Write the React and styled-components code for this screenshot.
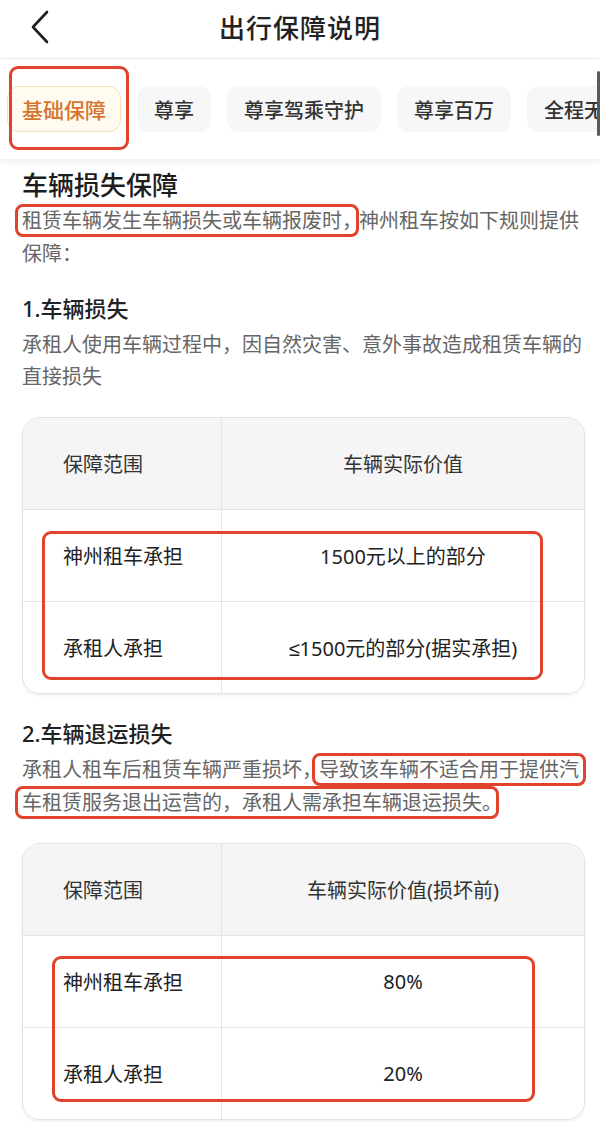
import React from "react";
import styled, { createGlobalStyle } from "styled-components";

const Global = createGlobalStyle`
  * { box-sizing: border-box; }
  body {
    margin: 0;
    background: #fff;
    font-family: "Noto Sans", "Liberation Sans", "Noto Sans CJK SC", sans-serif;
    -webkit-font-smoothing: antialiased;
  }
`;

const Page = styled.div`
  width: 600px;
  min-height: 1122px;
  overflow: hidden;
  background: #fff;
`;

const NavBar = styled.header`
  height: 59px;
  display: grid;
  grid-template-columns: 72px 1fr 72px;
  align-items: center;
  padding-bottom: 4px;
  border-bottom: 1px solid #ededed;
`;

const BackButton = styled.button`
  border: 0;
  background: none;
  padding: 0 0 0 30px;
  height: 40px;
  display: flex;
  align-items: center;
  cursor: pointer;
`;

const NavTitle = styled.h1`
  margin: 0;
  text-align: center;
  font-size: 26px;
  font-weight: 500;
  letter-spacing: 1px;
  color: #222;
`;

const TabBar = styled.nav`
  position: relative;
  height: 101px;
  display: flex;
  align-items: center;
  gap: 16px;
  padding-left: 7px;
  overflow: hidden;
  border-bottom: 1px solid #f0f0f0;
  box-shadow: 0 3px 5px rgba(0, 0, 0, 0.05);
`;

const Tab = styled.button`
  position: relative;
  flex: 0 0 auto;
  height: 46px;
  padding: 0 ${(p) => (p.$active ? "14px" : "16px")};
  border-radius: 12px;
  border: 1.5px solid ${(p) => (p.$active ? "#f1e2b8" : "transparent")};
  background: ${(p) => (p.$active ? "#fffbf1" : "#f7f7f7")};
  color: ${(p) => (p.$active ? "#d7742f" : "#333")};
  font-family: inherit;
  font-size: ${(p) => (p.$active ? "21px" : "20px")};
  font-weight: 500;
  white-space: nowrap;
  cursor: pointer;
`;

const TabMark = styled.span`
  position: absolute;
  top: -21px;
  bottom: -19px;
  left: 1px;
  right: -9px;
  border: 3px solid #e1422b;
  border-radius: 9px;
  pointer-events: none;
`;

const ScrollThumb = styled.span`
  position: absolute;
  right: 0;
  top: 12px;
  width: 3px;
  height: 65px;
  border-radius: 2px;
  background: #5a5a5a;
`;

const Content = styled.main`
  padding: 0 15px 20px 22px;
`;

const SectionTitle = styled.h2`
  margin: 7px 0 0;
  font-size: 26px;
  line-height: 36px;
  font-weight: 500;
  color: #1d1d1d;
`;

const SubTitle = styled.h3`
  margin: ${(p) => p.$top} 0 0;
  font-size: 22px;
  line-height: 32px;
  font-weight: 500;
  color: #222;
`;

const Para = styled.p`
  margin: ${(p) => p.$top} 0 0;
  font-size: 20px;
  line-height: ${(p) => p.$lh};
  color: #666;
  white-space: nowrap;
`;

const Mark = styled.span`
  border: 3px solid #e1422b;
  border-radius: 8px;
  padding: 0 4px;
  margin-left: ${(p) => (p.$lineStart ? "-7px" : "0")};
`;

const Half = styled.span`
  font-family: "Noto Sans CJK SC", sans-serif;
  font-feature-settings: "halt";
`;

const Table = styled.div`
  margin-top: ${(p) => p.$top};
  border: 1.5px solid #e2e2e2;
  border-radius: 18px;
  overflow: hidden;
  box-shadow: 0 2px 3px rgba(0, 0, 0, 0.06);
`;

const TableBody = styled.div`
  position: relative;
`;

const Row = styled.div`
  display: grid;
  grid-template-columns: 199px 1fr;
  height: ${(p) => (p.$head ? "91px" : "92px")};
  background: ${(p) => (p.$head ? "#f5f5f5" : "#fff")};
  border-top: ${(p) => (p.$head ? "none" : "1.5px solid #e4e4e4")};
`;

const LabelCell = styled.div`
  display: flex;
  align-items: center;
  padding-left: 40px;
  border-right: 1.5px solid #e4e4e4;
  font-size: 20px;
  color: ${(p) => (p.$head ? "#333" : "#222")};
`;

const ValueCell = styled.div`
  display: flex;
  align-items: center;
  justify-content: center;
  font-size: 20px;
  color: ${(p) => (p.$head ? "#333" : "#222")};
`;

const TableMark = styled.span`
  position: absolute;
  top: ${(p) => p.$t}px;
  bottom: ${(p) => p.$b}px;
  left: ${(p) => p.$l}px;
  right: ${(p) => p.$r}px;
  border: 3px solid #e1422b;
  border-radius: 9px;
  pointer-events: none;
`;

const tabs = ["基础保障", "尊享", "尊享驾乘守护", "尊享百万", "全程无忧"];

function CoverTable({ top, head, rows, mark }) {
  return (
    <Table $top={top}>
      <Row $head>
        <LabelCell $head>保障范围</LabelCell>
        <ValueCell $head>{head}</ValueCell>
      </Row>
      <TableBody>
        {rows.map(([label, value]) => (
          <Row key={label}>
            <LabelCell>{label}</LabelCell>
            <ValueCell>{value}</ValueCell>
          </Row>
        ))}
        <TableMark $t={mark.t} $b={mark.b} $l={mark.l} $r={mark.r} />
      </TableBody>
    </Table>
  );
}

export default function App() {
  return (
    <Page>
      <Global />
      <NavBar>
        <BackButton aria-label="返回">
          <svg width="20" height="34" viewBox="0 0 20 34" fill="none">
            <path
              d="M17 2 L3 17 L17 32"
              stroke="#1f1f1f"
              strokeWidth="2.6"
              strokeLinecap="round"
              strokeLinejoin="round"
            />
          </svg>
        </BackButton>
        <NavTitle>出行保障说明</NavTitle>
        <span />
      </NavBar>

      <TabBar>
        {tabs.map((t, i) => (
          <Tab key={t} $active={i === 0}>
            {t}
            {i === 0 && <TabMark />}
          </Tab>
        ))}
        <ScrollThumb />
      </TabBar>

      <Content>
        <SectionTitle>车辆损失保障</SectionTitle>
        <Para $top="0" $lh="33px">
          <Mark $lineStart>
            租赁车辆发生车辆损失或车辆报废时<Half>，</Half>
          </Mark>
          神州租车按如下规则提供
          <br />
          保障：
        </Para>

        <SubTitle $top="22px">1.车辆损失</SubTitle>
        <Para $top="5px" $lh="32px">
          承租人使用车辆过程中，因自然灾害、意外事故造成租赁车辆的
          <br />
          直接损失
        </Para>

        <CoverTable
          top="24px"
          head="车辆实际价值"
          rows={[
            ["神州租车承担", "1500元以上的部分"],
            ["承租人承担", "≤1500元的部分(据实承担)"],
          ]}
          mark={{ t: 22, b: 13, l: 19, r: 41 }}
        />

        <SubTitle $top="23px">2.车辆退运损失</SubTitle>
        <Para $top="4px" $lh="32px">
          承租人租车后租赁车辆严重损坏<Half>，</Half>
          <Mark>导致该车辆不适合用于提供汽</Mark>
          <br />
          <Mark $lineStart>
            车租赁服务退出运营的，承租人需承担车辆退运损失<Half>。</Half>
          </Mark>
        </Para>

        <CoverTable
          top="24px"
          head="车辆实际价值(损坏前)"
          rows={[
            ["神州租车承担", "80%"],
            ["承租人承担", "20%"],
          ]}
          mark={{ t: 21, b: 17, l: 29, r: 49 }}
        />
      </Content>
    </Page>
  );
}
